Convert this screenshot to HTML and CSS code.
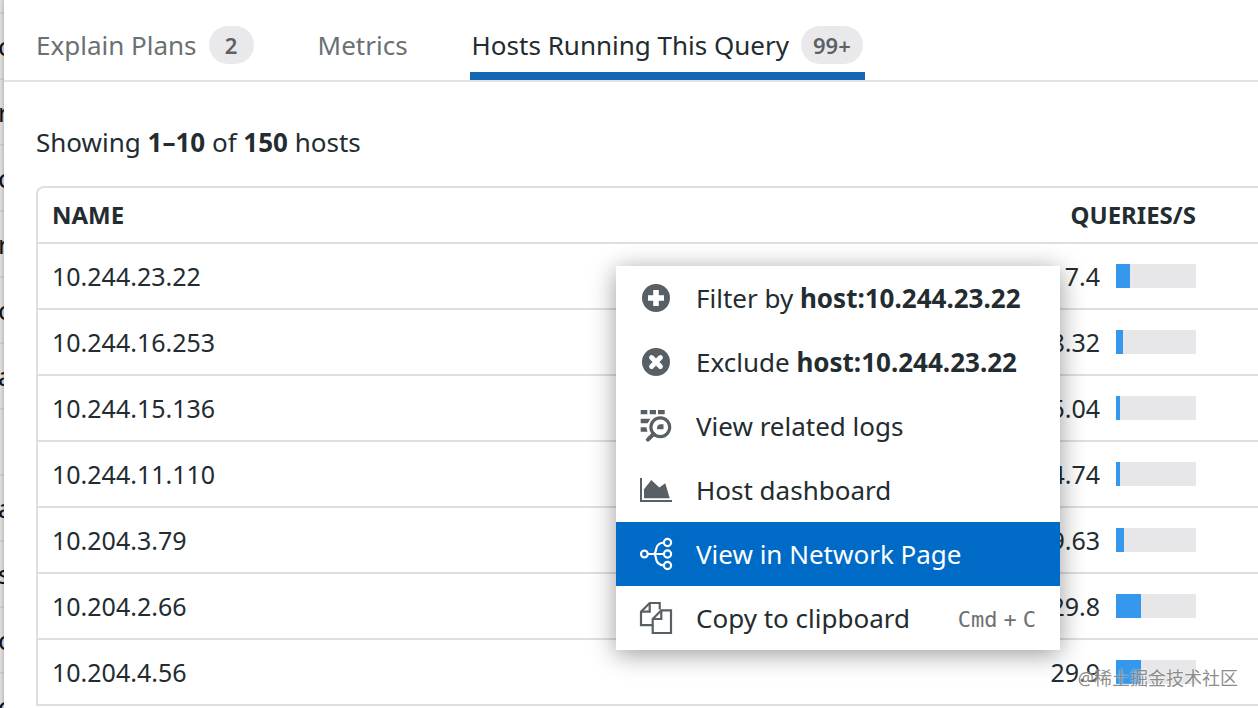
FILE: index.html
```html
<!DOCTYPE html>
<html lang="en">
  <head>
    <meta charset="UTF-8" />
    <meta name="viewport" content="width=device-width, initial-scale=1.0" />

    <title>Hosts Running This Query</title>

    <link rel="stylesheet" href="styles.css">
  </head>

  <body>
    <div class="backdrop" aria-hidden="true">
      <div>c</div>
      <div>r</div>
      <div>c</div>
      <div>r</div>
      <div>c</div>
      <div>a</div>
      <div></div>
      <div>a</div>
      <div>s</div>
      <div>c</div>
      <div>c</div>
    </div>

    <main class="panel">
      <nav class="tabs">
        <a href="#plans" class="tab">Explain Plans <span class="count">2</span></a>
        <a href="#metrics" class="tab">Metrics</a>
        <a href="#hosts" class="tab active">Hosts Running This Query <span class="count">99+</span></a>
      </nav>

      <p class="summary">Showing <b>1–10</b> of <b>150</b> hosts</p>

      <div class="hosts">
        <table>
          <thead>
            <tr>
              <th>NAME</th>
              <th class="queries">QUERIES/S</th>
            </tr>
          </thead>
          <tbody>
            <tr>
              <td>10.244.23.22</td>
              <td><div class="rate">17.4 <span class="bar"><span style="width: 18%"></span></span></div></td>
            </tr>
            <tr>
              <td>10.244.16.253</td>
              <td><div class="rate">8.32 <span class="bar"><span style="width: 9%"></span></span></div></td>
            </tr>
            <tr>
              <td>10.244.15.136</td>
              <td><div class="rate">5.04 <span class="bar"><span style="width: 5%"></span></span></div></td>
            </tr>
            <tr>
              <td>10.244.11.110</td>
              <td><div class="rate">4.74 <span class="bar"><span style="width: 5%"></span></span></div></td>
            </tr>
            <tr>
              <td>10.204.3.79</td>
              <td><div class="rate">9.63 <span class="bar"><span style="width: 10%"></span></span></div></td>
            </tr>
            <tr>
              <td>10.204.2.66</td>
              <td><div class="rate">29.8 <span class="bar"><span style="width: 31%"></span></span></div></td>
            </tr>
            <tr>
              <td>10.204.4.56</td>
              <td><div class="rate">29.9 <span class="bar"><span style="width: 31%"></span></span></div></td>
            </tr>
          </tbody>
        </table>

        <div class="menu">
          <button>
            <svg viewBox="0 0 32 32">
              <circle cx="16" cy="16" r="14" />
              <path d="M16 8v16M8 16h16" stroke="#fff" stroke-width="5.6" />
            </svg>
            <span>Filter by <b>host:10.244.23.22</b></span>
          </button>
          <button>
            <svg viewBox="0 0 32 32">
              <circle cx="16" cy="16" r="14" />
              <path d="M11.6 11.6l8.8 8.8M20.4 11.6l-8.8 8.8" stroke="#fff" stroke-width="5" stroke-linecap="round" />
            </svg>
            <span>Exclude <b>host:10.244.23.22</b></span>
          </button>
          <button>
            <svg viewBox="0 0 32 32">
              <path d="M.7 0h6.6v4.3H.7zM9.7 0h6.3v4.3H9.7zM18 0h6.7v4.3H18zM.7 8.7h9.6l-2.6 4.6h-7zM.7 17.3h5.6l1.2 4.5H.7z" />
              <path d="M17 19.300v-1.300a4 4 0 0 1 4-3.700h2.500v5z" />
              <circle cx="20.3" cy="17.3" r="9.400" fill="none" stroke="currentColor" stroke-width="3.200" />
              <path d="M13.6 24l-5.700 5.700" stroke="currentColor" stroke-width="4" stroke-linecap="round" />
            </svg>
            <span>View related logs</span>
          </button>
          <button>
            <svg viewBox="0 0 32 32">
              <path d="M0 4h2v22h30v2H0z" />
              <path d="M4 24.3v-9L11.3 6l8 7.6 6-4.3 4.4 15z" />
            </svg>
            <span>Host dashboard</span>
          </button>
          <button class="selected">
            <svg viewBox="0 0 32 32" class="outline">
              <circle cx="4.4" cy="16" r="3.4" />
              <circle cx="27.5" cy="4.5" r="3.6" />
              <circle cx="27.5" cy="16" r="3.6" />
              <circle cx="27.5" cy="27.500" r="3.600" />
              <path d="M7.800 16H24M24 4.500C18 5 16.500 8 16 11.500 15.700 14 15.500 16 13.500 16 15.500 16 15.700 18 16 20.500 16.500 24 18 27 24 27.500" />
            </svg>
            <span>View in Network Page</span>
          </button>
          <button>
            <svg viewBox="0 0 32 32" class="outline">
              <path d="M12 23.200H1V9.700L9.700 1h10v6.500" />
              <path d="M1 9.700h8.700V1M12.700 17h8.600V8.300" />
              <path d="M12.700 17l8.600-8.700H31V31H12.700z" />
            </svg>
            <span>Copy to clipboard</span>
            <kbd><span>Cmd</span><span>+</span><span>C</span></kbd>
          </button>
        </div>
      </div>
    </main>

    <div class="watermark">@稀土掘金技术社区</div>
  </body>
</html>
```
FILE: styles.css
```css
* {
  box-sizing: border-box;
}

body {
  display: grid;
  grid-template-columns: 4px 1fr;
  position: relative;
  height: 100vh;
  margin: 0;
  overflow: hidden;
  font-family: "Noto Sans", sans-serif;
  font-size: 26px;
  line-height: 36px;
  color: #232c30;
  background: #fff;
}

/* page that stays visible behind the side panel */
.backdrop {
  overflow: hidden;
  padding-top: 12px;
  background: #dedede;
}
.backdrop div {
  height: 66px;
  padding-top: 14px;
  border-top: 2px solid #cfcfcf;
  text-indent: -2px;
  color: #111;
}

.panel {
  min-width: 0;
  background: #fff;
  box-shadow: 0 0 4px rgba(0, 0, 0, 0.3);
}

.tabs {
  display: flex;
  gap: 60px;
  height: 82px;
  padding-left: 30px;
  border-bottom: 2px solid #e4e4e6;
}
.tab {
  display: flex;
  align-items: center;
  gap: 12px;
  padding: 18px 2px 8px;
  color: #6b7073;
  text-decoration: none;
  white-space: nowrap;
}
.tab.active {
  color: #232c30;
  border-bottom: 8px solid #1468b3;
  padding-bottom: 0;
}
.count {
  min-width: 45px;
  height: 38px;
  padding: 0 12px;
  border-radius: 19px;
  background: #e9e9eb;
  color: #5c6166;
  font-size: 22px;
  font-weight: 600;
  line-height: 38px;
  text-align: center;
}

.summary {
  margin: 42px 0 26px 32px;
}
b {
  font-weight: 700;
}

.hosts {
  position: relative;
  margin-left: 32px;
  border: 2px solid #dfdfe1;
  border-right: none;
  border-bottom: none;
  border-top-left-radius: 8px;
}
table {
  width: 100%;
  border-spacing: 0;
}
th,
td {
  height: 66px;
  padding: 0 62px 0 14px;
  border-bottom: 2px solid #dfdfe1;
  font-size: 25px;
  text-align: left;
}
th {
  height: 56px;
  font-size: 24px;
  font-weight: 700;
}
.queries {
  text-align: right;
}
.rate {
  display: flex;
  align-items: center;
  justify-content: flex-end;
  gap: 16px;
}
.bar {
  width: 80px;
  height: 24px;
  background: #e7e7e9;
}
.bar span {
  display: block;
  height: 100%;
  background: #3598ec;
}

.menu {
  position: absolute;
  top: 78px;
  right: 198px;
  width: 444px;
  background: #fff;
  box-shadow: 0 4px 24px rgba(0, 0, 0, 0.4);
}
.menu button {
  display: flex;
  align-items: center;
  width: 100%;
  height: 64px;
  padding: 0 24px;
  border: none;
  background: none;
  font: inherit;
  color: inherit;
  white-space: nowrap;
}
.menu svg {
  width: 32px;
  height: 32px;
  margin-right: 24px;
  color: #596065;
  fill: currentColor;
  overflow: visible;
}
.menu svg.outline {
  fill: none;
  stroke: currentColor;
  stroke-width: 2.2;
}
.menu .selected {
  background: #006bc6;
  color: #fff;
}
.menu .selected svg {
  color: #fff;
}
kbd {
  display: flex;
  gap: 6px;
  margin-left: auto;
  padding-top: 4px;
  font-family: "DejaVu Sans Mono", monospace;
  font-size: 22px;
  color: #6b7073;
}

.watermark {
  position: absolute;
  right: 20px;
  bottom: 12px;
  font-family: "Noto Sans", "Noto Sans CJK SC", sans-serif;
  font-size: 18px;
  line-height: 36px;
  color: rgba(110, 110, 110, 0.8);
  text-shadow: 0 0 2px #fff;
}
```
